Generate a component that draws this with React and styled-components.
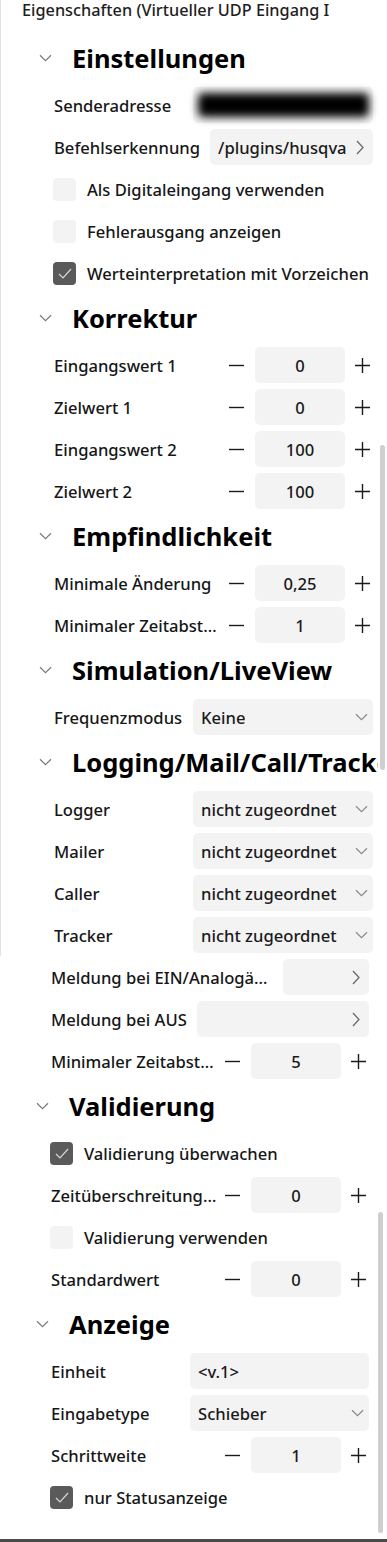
import React from 'react';
import styled, { createGlobalStyle } from 'styled-components';

const Global = createGlobalStyle`
  html, body { margin: 0; padding: 0; background: #fff; }
  body { font-family: "Noto Sans", "Open Sans", sans-serif; color: #161616; }
  * { box-sizing: border-box; }
`;

const Page = styled.div`
  width: 387px;
  height: 1542px;
  overflow: hidden;
  background: #fff;
  display: flex;
  flex-direction: column;
`;

const Panel = styled.section`
  position: relative;
  border-left: ${p => (p.$bordered ? '1px solid #e2e2e2' : '0')};
  padding: ${p => p.$pad};
  ${p => p.$grow && 'flex: 1;'}
  ${p => p.$bottomLine && 'border-bottom: 3px solid #4a4a4a;'}
`;

const Title = styled.div`
  height: 20px;
  line-height: 20px;
  margin-bottom: 14px;
  font-size: 16.3px;
  font-weight: 500;
  white-space: nowrap;
  color: #1e1e1e;
`;

const Header = styled.div`
  height: 48px;
  margin-bottom: 2px;
  margin-right: ${p => p.$clip}px;
  display: flex;
  align-items: center;
  gap: 20px;
  padding-left: 17px;
  overflow: hidden;
`;

const HeaderChev = styled.span`
  flex: 0 0 auto;
  display: flex;
`;

const HeaderTitle = styled.h2`
  flex: 0 0 auto;
  margin: 0;
  font-size: 25.5px;
  font-weight: 700;
  color: #000;
  white-space: nowrap;
`;

const Row = styled.div`
  height: 42px;
  display: flex;
  align-items: center;
  gap: ${p => p.$gap ?? 10}px;
  padding-left: 32px;
`;

const Label = styled.span`
  flex: ${p => (p.$flex ? '1 1 auto' : '0 0 auto')};
  min-width: ${p => (p.$flex ? '0' : '129px')};
  max-width: ${p => (p.$flex ? 'none' : '222px')};
  font-size: 16.6px;
  font-weight: 500;
  white-space: nowrap;
  overflow: hidden;
  text-overflow: ellipsis;
`;

const Field = styled.div`
  flex: 1;
  min-width: 0;
  height: 36px;
  border-radius: 5px;
  background: #f3f3f3;
  display: flex;
  align-items: center;
  justify-content: space-between;
  padding: 0 ${p => (p.$chev === 'down' ? 5 : 9)}px 0 8px;
  font-size: 16.6px;
  font-weight: 500;
  position: relative;
`;

const FieldText = styled.span`
  white-space: nowrap;
  overflow: hidden;
  color: #1a1a1a;
`;

const Redaction = styled.div`
  position: absolute;
  left: 5px;
  right: 4px;
  top: 6px;
  height: 24px;
  background: #000;
  border-radius: 5px;
  filter: blur(4px);
`;

const Stepper = styled.div`
  flex: 0 0 auto;
  display: flex;
  align-items: center;
`;

const StepBtn = styled.span`
  width: 22px;
  height: 36px;
  display: flex;
  align-items: center;
  justify-content: center;
`;

const StepValue = styled.div`
  width: 90px;
  height: 36px;
  margin: 0 6px 0 8px;
  border-radius: 5px;
  background: #f3f3f3;
  display: flex;
  align-items: center;
  justify-content: center;
  font-size: 16.6px;
  font-weight: 500;
  color: #1a1a1a;
`;

const CheckRow = styled(Row)`
  gap: 11px;
`;

const CheckBox = styled.span`
  width: 23px;
  height: 23px;
  margin-left: -1px;
  border-radius: 4px;
  background: ${p => (p.$checked ? '#5a5a5a' : '#f3f3f3')};
  display: flex;
  align-items: center;
  justify-content: center;
`;

const CheckText = styled.span`
  font-size: 16.6px;
  font-weight: 500;
  white-space: nowrap;
`;

const Thumb = styled.div`
  position: absolute;
  left: ${p => p.$x}px;
  top: ${p => p.$y}px;
  width: 5px;
  height: ${p => p.$h}px;
  border-radius: 3px;
  background: #cfcfcf;
`;

const ChevDown = ({ color = '#8a8a8a', w = 13 }) => (
  <svg width={w} height="8" viewBox="0 0 13 8" fill="none">
    <path d="M1 1.2 L6.5 6.6 L12 1.2" stroke={color} strokeWidth="1.2" />
  </svg>
);

const ChevRight = () => (
  <svg width="8" height="15" viewBox="0 0 8 15" fill="none">
    <path d="M1 1 L7 7.5 L1 14" stroke="#6a6a6a" strokeWidth="1.3" />
  </svg>
);

const Minus = () => (
  <svg width="15" height="15" viewBox="0 0 15 15">
    <path d="M0 7.5 H15" stroke="#1a1a1a" strokeWidth="1.4" />
  </svg>
);

const Plus = () => (
  <svg width="15" height="15" viewBox="0 0 15 15">
    <path d="M0 7.5 H15 M7.5 0 V15" stroke="#1a1a1a" strokeWidth="1.4" />
  </svg>
);

const Check = () => (
  <svg width="14" height="11" viewBox="0 0 14 11" fill="none">
    <path d="M1 6 L5 10 L13 1" stroke="#d8d8d8" strokeWidth="1.2" />
  </svg>
);

const SectionHeader = ({ title, clip = 0 }) => (
  <Header $clip={clip}>
    <HeaderChev><ChevDown color="#7a7a7a" /></HeaderChev>
    <HeaderTitle>{title}</HeaderTitle>
  </Header>
);

const StepRow = ({ label, value }) => (
  <Row $gap={4}>
    <Label $flex>{label}</Label>
    <Stepper>
      <StepBtn><Minus /></StepBtn>
      <StepValue>{value}</StepValue>
      <StepBtn><Plus /></StepBtn>
    </Stepper>
  </Row>
);

const FieldRow = ({ label, value, chev, children }) => (
  <Row>
    <Label>{label}</Label>
    <Field $chev={chev}>
      <FieldText>{value}</FieldText>
      {chev === 'down' && <ChevDown />}
      {chev === 'right' && <ChevRight />}
      {children}
    </Field>
  </Row>
);

const CheckItem = ({ label, checked }) => (
  <CheckRow>
    <CheckBox $checked={checked}>{checked && <Check />}</CheckBox>
    <CheckText>{label}</CheckText>
  </CheckRow>
);

export default function App() {
  return (
    <Page>
      <Global />
      <Panel $bordered $pad="0 14px 0 21px">
        <Title>Eigenschaften (Virtueller UDP Eingang I</Title>

        <SectionHeader title="Einstellungen" />
        <FieldRow label="Senderadresse" value="">
          <Redaction />
        </FieldRow>
        <FieldRow label="Befehlserkennung" value="/plugins/husqva" chev="right" />
        <CheckItem label="Als Digitaleingang verwenden" />
        <CheckItem label="Fehlerausgang anzeigen" />
        <CheckItem label="Werteinterpretation mit Vorzeichen" checked />

        <SectionHeader title="Korrektur" />
        <StepRow label="Eingangswert 1" value="0" />
        <StepRow label="Zielwert 1" value="0" />
        <StepRow label="Eingangswert 2" value="100" />
        <StepRow label="Zielwert 2" value="100" />

        <SectionHeader title="Empfindlichkeit" />
        <StepRow label="Minimale Änderung" value="0,25" />
        <StepRow label="Minimaler Zeitabstand" value="1" />

        <SectionHeader title="Simulation/LiveView" />
        <FieldRow label="Frequenzmodus" value="Keine" chev="down" />

        <SectionHeader title="Logging/Mail/Call/Tracker" clip={-5} />
        <FieldRow label="Logger" value="nicht zugeordnet" chev="down" />
        <FieldRow label="Mailer" value="nicht zugeordnet" chev="down" />
        <FieldRow label="Caller" value="nicht zugeordnet" chev="down" />
        <FieldRow label="Tracker" value="nicht zugeordnet" chev="down" />

        <Thumb $x={379} $y={445} $h={325} />
      </Panel>

      <Panel $grow $bottomLine $pad="0 18px 0 19px">
        <FieldRow label="Meldung bei EIN/Analogänderung" value="" chev="right" />
        <FieldRow label="Meldung bei AUS" value="" chev="right" />
        <StepRow label="Minimaler Zeitabstand" value="5" />

        <SectionHeader title="Validierung" />
        <CheckItem label="Validierung überwachen" checked />
        <StepRow label="Zeitüberschreitung in Sekunden" value="0" />
        <CheckItem label="Validierung verwenden" />
        <StepRow label="Standardwert" value="0" />

        <SectionHeader title="Anzeige" />
        <FieldRow label="Einheit" value="<v.1>" />
        <FieldRow label="Eingabetype" value="Schieber" chev="down" />
        <StepRow label="Schrittweite" value="1" />
        <CheckItem label="nur Statusanzeige" checked />

        <Thumb $x={378} $y={256} $h={321} />
      </Panel>
    </Page>
  );
}
